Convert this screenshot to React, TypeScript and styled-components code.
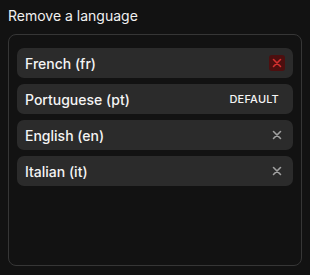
import React from "react";
import styled, { createGlobalStyle } from "styled-components";

const Global = createGlobalStyle`
  html, body { margin: 0; padding: 0; background: #121212; }
  body { font-family: Inter, "Noto Sans", sans-serif; color: #f2f2f2; }
`;

const Page = styled.div`
  padding: 6px 8px 8px 8px;
  display: flex;
  flex-direction: column;
  gap: 9px;
`;

const Title = styled.div`
  font-size: 14px;
  line-height: 19px;
  color: #f0f0f0;
  font-weight: 400;
`;

const Panel = styled.div`
  height: 232px;
  box-sizing: border-box;
  border: 1px solid #363636;
  border-radius: 8px;
  padding: 13px 8px;
  display: flex;
  flex-direction: column;
  gap: 6px;
`;

const Row = styled.div`
  height: 30px;
  border-radius: 7px;
  background: #2b2b2b;
  display: flex;
  align-items: center;
  justify-content: space-between;
  padding: 0 8px;
`;

const Name = styled.span`
  font-size: 14px;
  font-weight: 500;
  color: #f4f4f4;
`;

const Remove = styled.button<{ $danger?: boolean }>`
  width: 16px;
  height: 16px;
  border: none;
  padding: 0;
  border-radius: 3px;
  display: flex;
  align-items: center;
  justify-content: center;
  background: ${(p) => (p.$danger ? "#4d0f0f" : "transparent")};
  color: ${(p) => (p.$danger ? "#d3302f" : "#a0a0a0")};
`;

const Badge = styled.span`
  font-size: 11px;
  font-weight: 500;
  color: #f4f4f4;
  letter-spacing: 0.2px;
  margin-right: 6px;
`;

const X = () => (
  <svg width="10" height="10" viewBox="0 0 10 10" fill="none">
    <path d="M1.5 1.5 L8.5 8.5 M8.5 1.5 L1.5 8.5" stroke="currentColor" strokeWidth="1.6" strokeLinecap="round" />
  </svg>
);

const langs = [
  { name: "French (fr)", danger: true },
  { name: "Portuguese (pt)", def: true },
  { name: "English (en)" },
  { name: "Italian (it)" },
];

export default function App() {
  return (
    <>
      <Global />
      <Page>
        <Title>Remove a language</Title>
        <Panel>
          {langs.map((l) => (
            <Row key={l.name}>
              <Name>{l.name}</Name>
              {l.def ? (
                <Badge>DEFAULT</Badge>
              ) : (
                <Remove $danger={l.danger}>
                  <X />
                </Remove>
              )}
            </Row>
          ))}
        </Panel>
      </Page>
    </>
  );
}
